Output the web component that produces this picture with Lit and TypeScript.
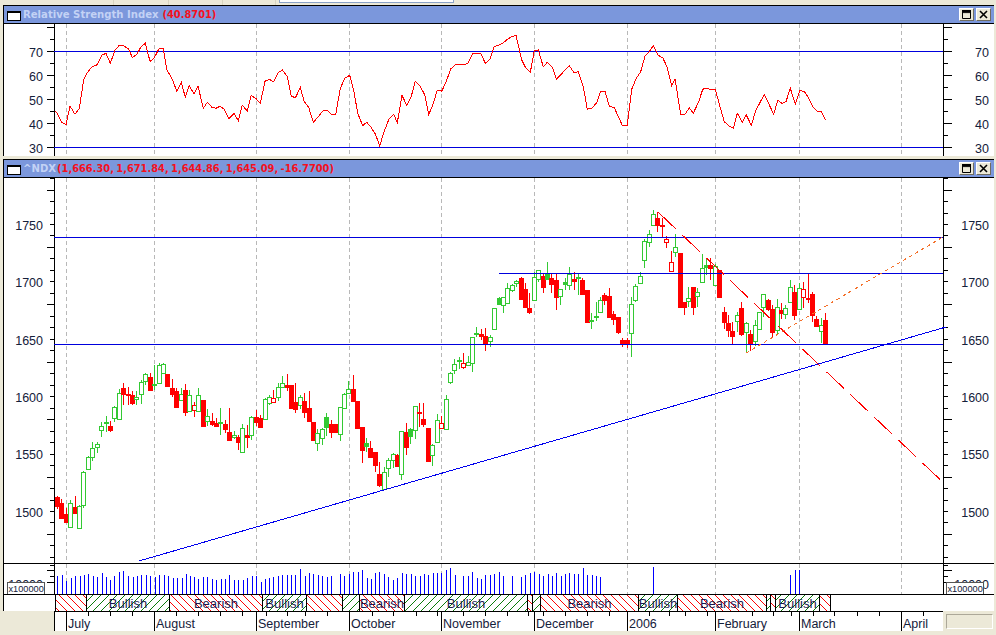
import { LitElement, html, css, svg } from "lit";
import { customElement, property } from "lit/decorators.js";

type C = [number, number, number, number, string];
const Z7: C[] = [[442,468,438,476,"r"],[460,503,447,506,"r"],[492,515,474,520,"r"],[460,532,450,532,"g"],[472,488,438,492,"r"],[468,535,465,535,"g"],[367,464,364,474,"g"],[320,358,318,360,"g"],[293,322,277,332,"g"],[283,292,275,308,"g"],[229,241,215,260,"g"],[215,218,198,245,"f"],[228,240,213,245,"r"],[172,205,168,215,"g"],[130,208,118,208,"g"],[114,131,98,165,"r"],[132,134,110,165,"r"],[135,158,122,165,"r"],[142,148,124,165,"g"],[96,133,90,162,"g"],[73,92,69,105,"g"],[82,119,68,120,"r"],[103,106,45,120,"f"],[46,98,40,98,"g"],[43,70,40,73,"g"],[72,108,72,112,"r"],[114,132,87,140,"r"],[124,170,115,175,"r"],[133,151,113,152,"g"],[121,185,102,197,"r"],[135,182,120,182,"g"],[166,181,155,200,"o"],[135,183,113,185,"g"],[150,228,150,232,"r"],[199,214,176,228,"g"],[213,221,188,228,"r"],[219,227,205,228,"r"],[216,220,174,255,"f"],[222,236,210,250,"r"],[246,269,174,269,"r"],[256,262,243,268,"g"],[261,277,255,300,"r"],[235,307,222,307,"g"],[255,260,225,294,"r"]];
const Z8: C[] = [[172,224,168,240,"g"],[172,185,150,198,"r"],[175,200,165,203,"r"],[118,176,114,178,"g"],[110,130,106,135,"g"],[115,127,90,128,"o"],[82,110,70,122,"g"],[68,82,48,85,"g"],[76,81,42,92,"r"],[76,143,76,143,"r"],[125,146,68,158,"r"],[110,136,105,148,"g"],[124,155,100,175,"r"],[144,184,93,184,"r"],[186,240,186,240,"r"],[220,248,208,272,"g"],[206,233,204,255,"g"],[171,200,158,228,"f"],[191,216,181,234,"r"],[192,216,192,216,"r"],[141,221,141,243,"g"],[103,145,100,145,"g"],[88,98,62,100,"g"],[87,123,44,125,"r"],[124,204,124,206,"r"],[201,269,201,310,"r"],[250,257,235,277,"f"],[264,291,243,291,"r"],[276,315,276,335,"r"],[342,376,305,380,"r"],[337,386,320,386,"g"],[301,325,295,350,"g"],[281,299,278,325,"g"],[286,318,281,320,"r"],[214,341,214,360,"g"],[216,261,190,285,"r"],[208,227,205,252,"f"],[139,211,139,238,"g"],[156,160,128,200,"r"],[178,191,130,200,"r"],[204,302,204,302,"r"],[256,286,252,318,"g"],[181,247,163,247,"g"],[190,203,168,207,"o"],[118,208,105,208,"g"]];
const Z6: C[] = [[370,397,365,402,"g"],[343,361,328,372,"g"],[331,334,322,358,"f"],[340,350,310,356,"o"],[335,344,318,345,"g"],[262,338,262,365,"g"],[249,253,232,262,"f"],[252,258,238,270,"r"],[258,282,235,302,"r"],[262,272,255,290,"g"],[175,236,175,240,"g"],[145,161,140,162,"f"],[142,166,140,190,"g"],[115,158,100,160,"g"],[106,121,102,125,"g"],[92,98,90,112,"g"],[84,146,82,146,"r"],[117,170,100,172,"r"],[175,186,130,192,"r"],[80,151,65,152,"g"],[61,86,61,95,"g"],[79,110,72,128,"r"],[72,88,37,88,"f"],[85,101,70,130,"r"],[90,140,70,180,"r"],[117,137,117,165,"g"],[97,101,85,120,"f"],[73,106,52,120,"g"],[88,94,67,120,"r"],[82,85,72,135,"f"],[91,131,85,131,"r"],[120,216,120,218,"r"],[210,212,190,236,"f"],[197,200,155,212,"f"]];
const Z5: C[] = [[330,367,322,370,"g"],[316,329,310,345,"r"],[318,380,294,380,"r"],[373,386,362,405,"r"],[381,427,381,432,"r"],[451,462,445,472,"r"],[451,462,445,474,"r"],[343,430,320,500,"g"],[289,329,283,335,"g"],[257,280,247,281,"g"],[153,211,148,233,"g"],[131,155,121,170,"g"],[73,106,60,108,"g"],[85,106,67,125,"r"],[105,109,85,140,"r"],[148,157,138,173,"o"],[217,244,183,244,"o"],[170,187,133,200,"g"],[190,352,190,355,"r"],[337,352,337,374,"r"],[323,334,290,350,"g"],[292,350,292,374,"r"],[307,317,295,350,"g"],[235,277,193,277,"g"],[226,231,205,255,"f"],[225,233,205,270,"r"],[228,284,222,285,"g"],[240,321,240,323,"r"],[366,396,352,418,"r"],[400,419,375,442,"r"],[423,437,395,462,"r"],[376,394,366,425,"g"],[355,432,337,437,"r"],[398,427,395,490,"g"],[432,458,420,482,"r"],[406,453,390,468,"g"],[367,418,365,418,"g"],[313,350,312,382,"g"],[330,358,326,362,"r"],[358,425,345,440,"r"],[352,420,327,432,"g"],[360,369,340,387,"r"],[355,372,345,388,"g"],[290,337,270,337,"g"],[307,374,285,390,"r"],[293,356,278,360,"g"],[296,320,275,355,"o"],[323,327,250,340,"r"],[313,374,305,395,"r"],[388,407,378,412,"r"],[406,424,385,460,"g"],[391,463,370,463,"r"]];

const shift = (base: number, list: C[]): C[] =>
  list.map(([a, b, c, d, t]) => [base + a / 3, base + b / 3, base + c / 3, base + d / 3, t] as C);
const candles: C[] = [...shift(350, Z7), ...shift(360, Z8), ...shift(250, Z6), ...shift(190, Z5)];
const candleX = (i: number) => Math.round(57 + 4.415 * i) + 0.5;

const R9 = [15,272,22,280,35,307,48,314,60,258,75,283,88,265,101,180,112,158,126,140,142,134,155,106,168,100,181,130,195,90,208,76,222,78,235,86,247,112,260,104,273,80,286,70,300,124,312,115,327,86,340,85,350,148,368,180,380,214,394,187,406,232,418,197,432,222,444,198,460,265,472,247,486,262,498,265,510,259,523,268,537,296,552,280,565,302,577,256,592,273,604,226,618,236,631,250,645,184,658,178,671,186,685,158,697,150,712,170,724,230,737,232,751,202,762,243,776,262,790,307,805,290,818,273,830,270,845,284,857,284,871,205,884,175,899,166,912,215,923,280,938,317,950,307,963,322,976,342,989,377,1004,330,1017,297,1031,283,1042,308,1056,226,1070,256,1083,232,1096,184,1110,198,1124,224,1136,284,1148,256,1162,210,1175,214,1188,186,1202,147,1216,135,1230,132,1242,135,1254,130,1267,102,1280,100,1292,100,1306,130,1320,118,1332,80,1345,76,1358,70,1372,58];
const R10 = [95,50,108,46,125,120,138,145,151,157,163,92,175,90,190,140,202,127,218,143,229,178,268,137,282,158,295,155,310,200,322,268,336,264,350,248,362,214,375,214,388,258,403,263,415,290,427,316,442,316,455,208,469,175,482,155,495,108,507,97,520,76,534,106,548,113,561,140,575,198,585,176,602,284,614,284,628,263,640,280,656,245,668,208,680,204,695,210,706,208,720,260,733,305,747,318,760,325,772,280,787,307,799,285,814,316,827,272,853,223,881,283,893,241,906,250,918,245,931,205,946,253,959,212,973,214,985,232,998,260,1011,273,1024,274,1037,300];
const toPts = (a: number[], x0: number) => {
  const out: string[] = [];
  for (let i = 0; i < a.length; i += 2) out.push(`${(x0 + a[i] / 3).toFixed(1)},${(20 + a[i + 1] / 3).toFixed(1)}`);
  return out.join(" ");
};
const rsiPoints = toPts(R9, 50) + " " + toPts(R10, 480);

const V2 = [171,288,185,285,199,303,212,294,226,288,240,287,252,285,265,282,279,288,291,291,305,279,319,291,331,299,343,288,357,276,370,273,384,288,398,291,411,289,424,285,437,285,451,289,464,291,477,285,491,285,504,288,518,293,531,294,545,293,557,282,569,288,582,291,595,296,609,291,622,291,636,297,649,301,662,297,675,297,688,285,702,300,715,300,728,300,741,294,755,288,768,288,782,306,796,296,808,294,820,291,834,288,847,285,860,285,873,285,886,285,900,267,914,288,927,279,940,281,954,285,967,288,980,291,994,288];
const V11 = [15,42,28,48,42,42,55,36,68,38,82,30,95,54,109,57,121,39,133,37,147,42,160,51,175,60,187,54,201,40,214,42,227,42,240,50,254,48,268,42,280,45,293,40,306,39,319,39,333,30,346,24,361,45,385,48,400,48,412,36,427,54,439,57,451,45,465,45,478,44,492,37,505,48,532,48,559,51,571,45,585,39,598,36,612,42,625,48,638,42,651,48,664,39,679,48,690,44,703,40,717,44,730,42,744,24,757,45,770,45,784,48,796,51,955,21];
const V3 = [391,285,406,270,418,270];
const volBars: [number, number][] = [];
const addVol = (a: number[], x0: number, base: number) => {
  for (let i = 0; i < a.length; i += 2) volBars.push([Math.round(x0 + a[i] / 3) + 0.5, (base - a[i + 1]) / 3]);
};
addVol(V2, 0, 342);
addVol(V11, 335, 103);
addVol(V3, 660, 342);

const GRID = [66.5, 154.5, 256.5, 349.5, 441.5, 534.5, 627.5, 715.5, 799.5, 901.5];
const MONTHS = ["July", "August", "September", "October", "November", "December", "2006", "February", "March", "April"];
const WEEK = [88, 110, 132, 176, 198, 220, 242, 266, 287, 305, 327, 372, 393, 416, 437, 463, 485, 507, 528, 543, 565, 587, 609, 649, 669, 685, 707, 752, 773, 791, 813, 834, 857, 879, 923];

const REGIMES: [number, number, string, string][] = [
  [55.5, 86.5, "red", ""], [86.5, 169.5, "grn", "Bullish"], [169.5, 262.5, "red", "Bearish"], [262.5, 306.5, "grn", "Bullish"],
  [306.5, 342.5, "red", ""], [342.5, 359.5, "grn", ""], [359.5, 404.5, "red", "Bearish"], [404.5, 527.5, "grn", "Bullish"],
  [527.5, 532.5, "red", ""], [532.5, 540.5, "grn", ""], [540.5, 638.5, "red", "Bearish"], [638.5, 677.5, "grn", "Bullish"],
  [677.5, 766.5, "red", "Bearish"], [766.5, 770.5, "grn", ""], [770.5, 775.5, "red", ""], [775.5, 819.5, "grn", "Bullish"], [819.5, 830.5, "red", ""],
];

const gridLines = (y1: number, y2: number) => GRID.map((x) => svg`<line class="grid" x1=${x} x2=${x} y1=${y1} y2=${y2}></line>`);

const ticks = (ys: number[], majorEvery: number, offset: number, y1: number, y2: number) => {
  const out = [];
  out.push(svg`<line class="ax" x1="54.5" x2="54.5" y1=${y1} y2=${y2}></line><line class="ax" x1="943.5" x2="943.5" y1=${y1} y2=${y2}></line>`);
  ys.forEach((y, k) => {
    const major = (k + offset) % majorEvery === 0;
    out.push(svg`<line class="ax" x1=${major ? 47 : 50} x2="54" y1=${y} y2=${y}></line><line class="ax" x1="944" x2=${major ? 952 : 948} y1=${y} y2=${y}></line>`);
  });
  return out;
};

const labels = (items: [string, number][]) =>
  items.map(([t, y]) => svg`<text class="lab" x="43" y=${y + 4.5} text-anchor="end">${t}</text><text class="lab" x="989" y=${y + 4.5} text-anchor="end">${t}</text>`);

@customElement("pane-title")
class PaneTitle extends LitElement {
  @property() name = "";
  @property() value = "";
  static styles = css`
    :host { display: flex; align-items: center; box-sizing: border-box; height: 19px; border-top: 1px solid #000; border-bottom: 1px solid #000; background: #7b97dc; font: bold 10.1px "DejaVu Sans", sans-serif; white-space: nowrap; }
    .win { box-sizing: border-box; width: 14px; height: 10px; margin: 2px 2px 0 3px; background: #fff; border: 1px solid #000; border-top-width: 2px; }
    .name { color: #c3d2f5; }
    .value { color: #f5101c; margin-left: 4px; font-size: 9.85px; word-spacing: -1px; }
    :host([name="^NDX"]) .value { margin-left: 1px; }
    .btns { display: flex; gap: 2px; margin-left: auto; margin-right: 3px; }
    .btn { display: flex; align-items: center; justify-content: center; box-sizing: border-box; width: 15px; height: 13px; background: #ece9d8; border: 1px solid; border-color: #fff #6f6c60 #6f6c60 #fff; }
    .btn svg { display: block; }
  `;
  render() {
    return html`<span class="win"></span><span class="name">${this.name}</span><span class="value">${this.value}</span>
      <span class="btns">
        <span class="btn"><svg width="9" height="9" viewBox="0 0 9 9"><path d="M.5 1.5h8v7h-8z M0 1h9v1.6H0z" fill="none" stroke="#000"/><rect width="9" height="2" fill="#000"/></svg></span>
        <span class="btn"><svg width="9" height="9" viewBox="0 0 9 9"><path d="M1 1l7 7M8 1l-7 7" stroke="#000" stroke-width="1.6" fill="none"/></svg></span>
      </span>`;
  }
}

@customElement("app-root")
class AppRoot extends LitElement {
  static styles = css`
    :host { display: block; width: 996px; height: 635px; overflow: hidden; background: #ece9d8; }
    .app { display: flex; flex-direction: column; width: 996px; height: 635px; }
    .strip { display: flex; gap: 0; height: 5px; position: relative; overflow: hidden; }
    .sep { width: 1px; height: 5px; background: #d8d4c0; }
    .sep.a { margin-left: 113px; } .sep.b { margin-left: 54px; } .sep.c { margin-left: 53px; } .sep.d { margin-left: 52px; }
    .tab { box-sizing: border-box; width: 175px; height: 3px; margin-left: 3px; background: #fff; border: 1px solid #8ba3c8; border-top: 0; }
    .pane { margin: 0 2px 0 3px; border-left: 1px solid #000; }
    .gap { height: 3px; }
    .rule { height: 1px; background: #000; }
    svg.plot { display: block; background: #fff; }
    .grid { stroke: #b8b8b8; stroke-dasharray: 4 3; shape-rendering: crispEdges; }
    .ax { stroke: #000; shape-rendering: crispEdges; }
    .lab { font: 12.5px "Liberation Sans", Arial, sans-serif; fill: #14203a; }
    .hl { stroke: #0000dd; shape-rendering: crispEdges; }
    .rsi { fill: none; stroke: #ff0000; shape-rendering: crispEdges; }
    .wick-r, .wick-o { stroke: #ff0000; shape-rendering: crispEdges; }
    .wick-g, .wick-f { stroke: #33c933; shape-rendering: crispEdges; }
    .body { shape-rendering: crispEdges; }
    .body-r { fill: #ff0000; }
    .body-f { fill: #33c933; }
    .body-o { fill: #fff; stroke: #ff0000; }
    .body-g { fill: #fff; stroke: #33c933; }
    .trend { stroke: #0000ee; shape-rendering: crispEdges; }
    .dashred { stroke: #ff0000; stroke-dasharray: 24.3 8.8; shape-rendering: crispEdges; }
    .dotted { stroke: #f4702a; stroke-dasharray: 3.5 3.5; shape-rendering: crispEdges; }
    .vol { stroke: #0000ff; shape-rendering: crispEdges; }
    .xbox { fill: #fff; stroke: #555; shape-rendering: crispEdges; }
    .xtxt { font: 9.2px "Liberation Sans", Arial, sans-serif; fill: #14203a; }
    .sepv { stroke: #000; shape-rendering: crispEdges; }
    .hr { stroke: #ff0000; shape-rendering: crispEdges; }
    .hg { stroke: #0a7a0a; shape-rendering: crispEdges; }
    .reg-red { fill: url(#hatch-red); }
    .reg-grn { fill: url(#hatch-grn); }
    .regtxt { font: 13px "Liberation Sans", Arial, sans-serif; fill: #1a1a50; }
    .axisrow { display: flex; height: 20px; }
    .spacer { width: 54px; }
    .axis { display: block; background: #fff; border-top: 1px solid #000; box-sizing: border-box; }
    .corner { flex: 1; display: flex; padding: 3px 3px 2px 3px; box-sizing: border-box; }
    .inset { flex: 1; background: #ece9d8; border: 1px solid; border-color: #aca899 #fff #fff #aca899; }
    .mon { font: 12.5px "Liberation Sans", Arial, sans-serif; fill: #14203a; }
  `;

  render() {
    const rsiTicks: number[] = [];
    for (let y = 27.5; y < 156; y += 12) rsiTicks.push(y);
    const mainTicks: number[] = [];
    for (let k = -4; k <= 29; k++) mainTicks.push(Math.floor(511.5 - k * 11.48) + 0.5);
    mainTicks.reverse();
    return html`<div class="app">
      <div class="strip"><span class="sep a"></span><span class="sep b"></span><span class="sep c"></span><span class="sep d"></span><span class="tab"></span></div>

      <section class="pane">
        <pane-title name="Relative Strength Index" value="(40.8701)"></pane-title>
        <svg class="plot" width="990" height="132" viewBox="4 24 990 132">
          ${gridLines(24, 156)}
          ${ticks(rsiTicks, 2, 0, 24, 156)}
          ${labels([["70", 52], ["60", 76], ["50", 100], ["40", 124], ["30", 148]])}
          <line class="hl" x1="54" x2="943" y1="51.5" y2="51.5"></line>
          <line class="hl" x1="54" x2="943" y1="147.5" y2="147.5"></line>
          <polyline class="rsi" points=${rsiPoints}></polyline>
        </svg>
      </section>

      <div class="gap"></div>

      <section class="pane">
        <pane-title name="^NDX" value="(1,666.30, 1,671.84, 1,644.86, 1,645.09, -16.7700)"></pane-title>
        <svg class="plot" width="990" height="385" viewBox="4 178 990 385">
          ${gridLines(178, 563)}
          ${ticks(mainTicks, 5, 4, 178, 563)}
          ${labels([["1750", 225], ["1700", 282.5], ["1650", 340], ["1600", 397], ["1550", 454.5], ["1500", 512]])}
          ${candles.map(([t, b, h, l, k], i) => {
            const x = candleX(i);
            const hollow = k === "g" || k === "o";
            const top = Math.round(t);
            const bot = Math.max(Math.round(b), top + 1);
            return svg`<line class="wick-${k}" x1=${x} x2=${x} y1=${Math.round(h)} y2=${Math.round(l)}></line>
              ${hollow
                ? svg`<rect class="body body-${k}" x=${x - 2} y=${top + 0.5} width="4" height=${bot - top}></rect>`
                : svg`<rect class="body body-${k}" x=${x - 2.5} y=${top} width="5" height=${bot - top + 1}></rect>`}`;
          })}
          <line class="hl" x1="54" x2="943" y1="237.5" y2="237.5"></line>
          <line class="hl" x1="499" x2="943" y1="273.5" y2="273.5"></line>
          <line class="hl" x1="54" x2="943" y1="344.5" y2="344.5"></line>
          <line class="trend" x1="139" y1="561" x2="946" y2="327"></line>
          <line class="dashred" x1="658.3" y1="212.3" x2="940" y2="479.5"></line>
          <line class="dotted" x1="746" y1="353" x2="943" y2="237"></line>
        </svg>
        <div class="rule"></div>
        <svg class="plot" width="990" height="30" viewBox="4 564 990 30">
          ${gridLines(564, 594)}
          <text class="lab" x="43" y="588.5" text-anchor="end">10000</text>
          <text class="lab" x="989" y="588.5" text-anchor="end">10000</text>
          ${ticks([565.5, 570.5, 576.5, 582.5], 2, 1, 564, 594)}
          ${volBars.map(([x, h]) => svg`<line class="vol" x1=${x} x2=${x} y1="594" y2=${594 - h}></line>`)}
          <rect class="xbox" x="7.5" y="582.5" width="37" height="12"></rect>
          <text class="xtxt" x="8.5" y="592">x100000</text>
          <rect class="xbox" x="946.5" y="582.5" width="37" height="12"></rect>
          <text class="xtxt" x="947.5" y="592">x100000</text>
        </svg>
        <div class="rule"></div>
        <svg class="plot" width="990" height="16" viewBox="4 595 990 16">
          <defs>
            <pattern id="hatch-red" patternUnits="userSpaceOnUse" width="8" height="8"><path class="hr" d="M0 0L8 8" fill="none"></path></pattern>
            <pattern id="hatch-grn" patternUnits="userSpaceOnUse" width="8" height="8"><path class="hg" d="M8 0L0 8" fill="none"></path></pattern>
          </defs>
          ${REGIMES.map(([a, b, c]) => svg`<rect class="reg-${c}" x=${a} y="595" width=${b - a} height="16"></rect><line class="sepv" x1=${a} x2=${a} y1="595" y2="611"></line>`)}
          <line class="sepv" x1="830.5" x2="830.5" y1="595" y2="611"></line>
          ${REGIMES.filter((r) => r[3]).map(([a, b, , t]) => svg`<text class="regtxt" x=${(a + b) / 2} y="607.5" text-anchor="middle">${t}</text>`)}
        </svg>
      </section>

      <div class="axisrow">
        <div class="spacer"></div>
        <svg class="axis" width="889" height="20" viewBox="54 612 889 19">
          <line class="ax" x1="54.5" x2="54.5" y1="612" y2="631"></line>
          ${WEEK.map((x) => svg`<line class="ax" x1=${x + 0.5} x2=${x + 0.5} y1="612" y2="616"></line>`)}
          ${GRID.map((x, i) => svg`<line class="ax" x1=${x} x2=${x} y1="612" y2="631"></line><text class="mon" x=${x + 1.5} y="628">${MONTHS[i]}</text>`)}
        </svg>
        <div class="corner"><div class="inset"></div></div>
      </div>
    </div>`;
  }
}
